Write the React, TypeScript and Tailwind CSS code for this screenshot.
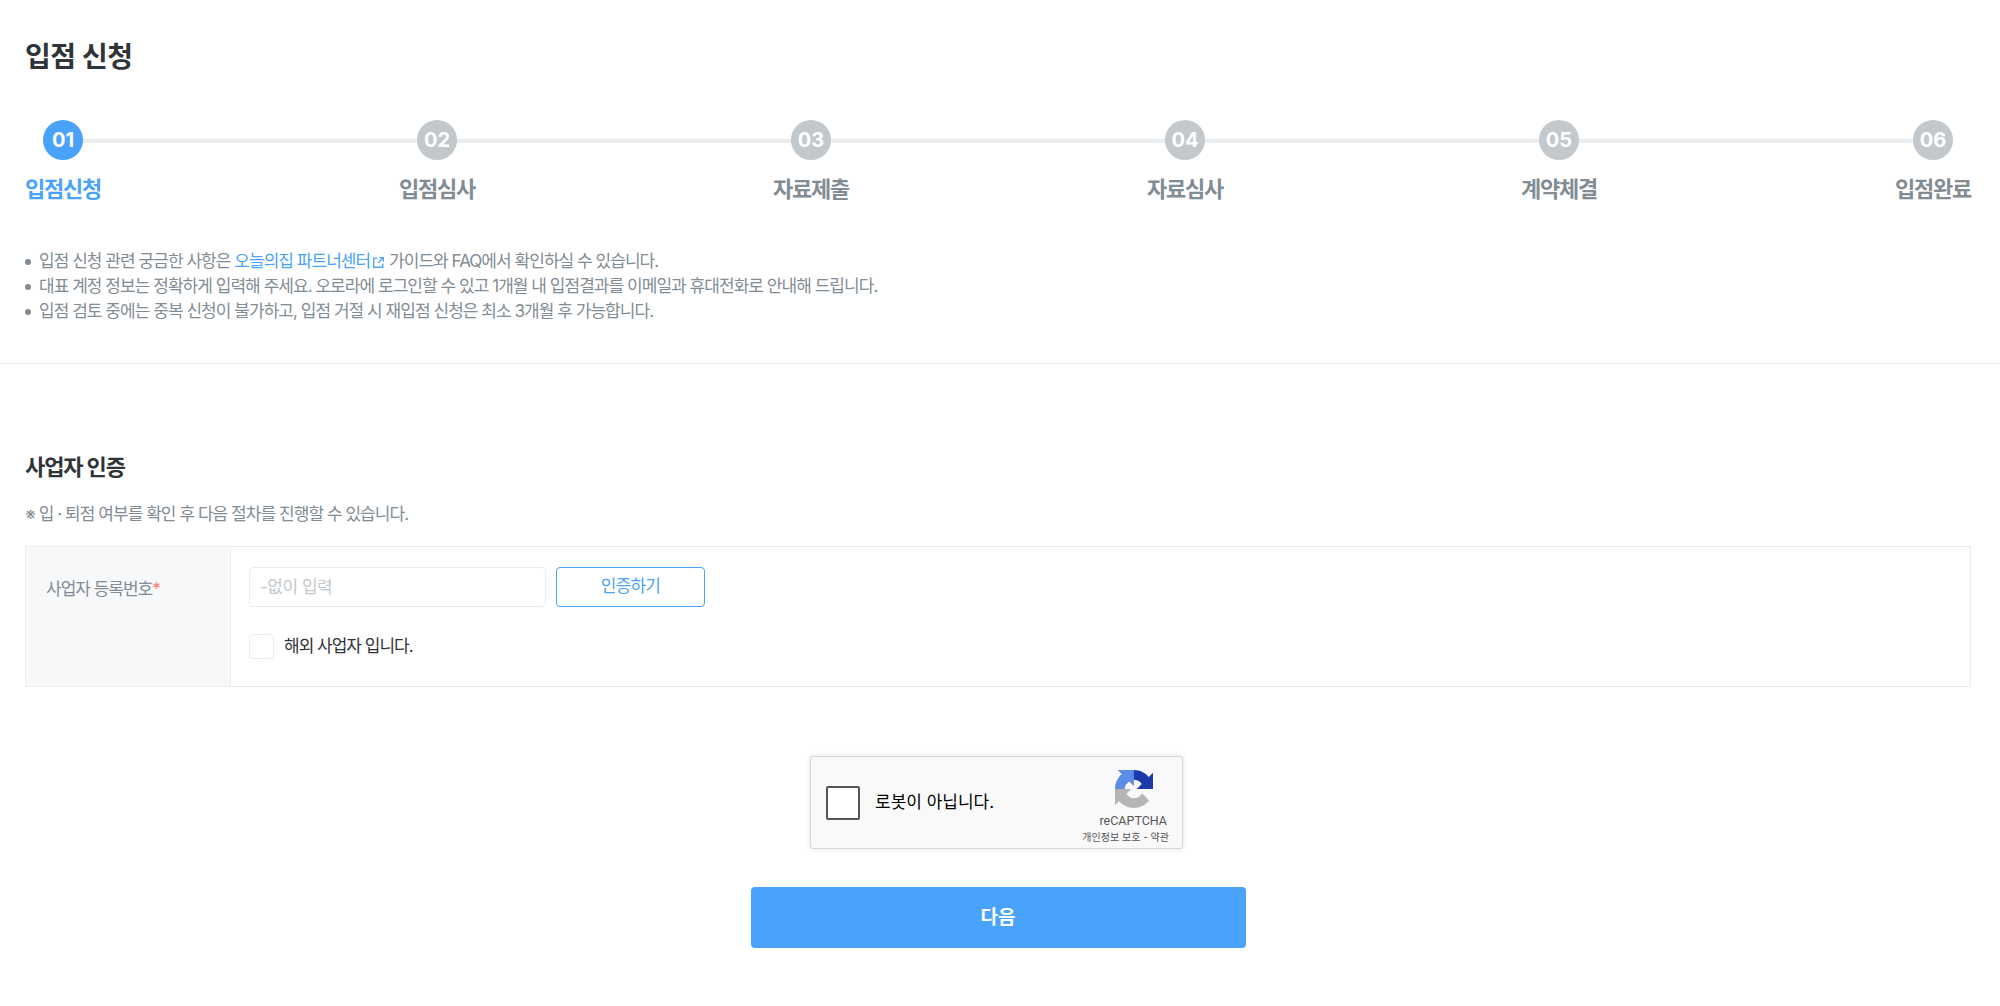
const font = "font-['Inter','Noto_Sans_CJK_KR',sans-serif]"

const steps = [
  { no: '01', label: '입점신청' },
  { no: '02', label: '입점심사' },
  { no: '03', label: '자료제출' },
  { no: '04', label: '자료심사' },
  { no: '05', label: '계약체결' },
  { no: '06', label: '입점완료' },
]

function ExternalIcon() {
  return (
    <svg viewBox="0 0 12 12" className="inline-block w-[13px] h-[13px] ml-[2px] align-[-2px]" fill="none" stroke="#4aa3fb" strokeWidth="1.2">
      <path d="M5 2H1.6v8.4H10V7" />
      <path d="M6.8 1.5h3.7v3.7" />
      <path d="M10.4 1.6L5.6 6.4" />
    </svg>
  )
}

function RecaptchaLogo() {
  return (
    <svg viewBox="0 0 64 64" className="w-[38px] h-[38px] mr-[16px]">
      <path d="M64 31.955l-.033-1.37V4.687l-7.16 7.16C50.948 4.674 42.033.093 32.05.093c-10.4 0-19.622 4.96-25.458 12.64l11.736 11.86a15.55 15.55 0 0 1 4.754-5.334c2.05-1.6 4.952-2.906 8.968-2.906.485 0 .86.057 1.135.163 4.976.393 9.288 3.14 11.828 7.124l-8.307 8.307c10.522-.04 22.4-.066 27.295.005" fill="#1c3aa9" />
      <path d="M31.862.001l-1.37.033H4.592l7.16 7.16C4.58 13.053-.001 21.968-.001 31.95c0 10.4 4.96 19.622 12.64 25.458l11.86-11.736a15.55 15.55 0 0 1-5.334-4.754c-1.6-2.05-2.906-4.952-2.906-8.968 0-.485.057-.86.163-1.135.393-4.976 3.14-9.288 7.124-11.828l8.307 8.307c-.04-10.522-.066-22.4.005-27.295" fill="#5b8ce8" />
      <path d="M.001 31.958l.033 1.37v25.9l7.16-7.16c5.86 7.173 14.774 11.754 24.757 11.754 10.4 0 19.622-4.96 25.458-12.64l-11.736-11.86a15.55 15.55 0 0 1-4.754 5.334c-2.05 1.6-4.952 2.906-8.968 2.906-.485 0-.86-.057-1.135-.163-4.976-.393-9.288-3.14-11.828-7.124l8.307-8.307c-10.522.04-22.4.066-27.295-.005" fill="#b5b5b5" />
    </svg>
  )
}

export default function App() {
  return (
    <div className={`${font} bg-white min-h-[1006px] text-[#2f3438]`}>
      <div className="pl-[25px] pr-[29px]">
        <h1 className="pt-[35px] text-[28px] leading-[44px] font-bold tracking-[-0.4px]">입점 신청</h1>

        <div className="relative mt-[41px] flex justify-between">
          <div className="absolute left-[38px] right-[38px] top-[19px] h-1 bg-[#eaedef]" />
          {steps.map((s, i) => (
            <div key={s.no} className="relative flex flex-col items-center w-[76px]">
              <div className={`w-10 h-10 rounded-full flex items-center justify-center text-white text-[20px] font-bold ${i === 0 ? 'bg-[#4aa3fb]' : 'bg-[#c2c8cc]'}`}>
                {s.no}
              </div>
              <div className={`mt-[14px] text-[22px] leading-[30px] font-semibold tracking-[-1.2px] whitespace-nowrap ${i === 0 ? 'text-[#4aa3fb]' : 'text-[#828c94]'}`}>
                {s.label}
              </div>
            </div>
          ))}
        </div>

        <ul className="mt-[45px] text-[17px] leading-[25px] tracking-[-0.96px] text-[#828c94]">
          <li className="flex items-center">
            <span className="w-[6px] h-[6px] rounded-full bg-[#828c94] mr-[8px] shrink-0" />
            <span>
              입점 신청 관련 궁금한 사항은 <span className="text-[#4aa3fb]">오늘의집 파트너센터<ExternalIcon /></span> 가이드와 FAQ에서 확인하실 수 있습니다.
            </span>
          </li>
          <li className="flex items-center">
            <span className="w-[6px] h-[6px] rounded-full bg-[#828c94] mr-[8px] shrink-0" />
            <span>대표 계정 정보는 정확하게 입력해 주세요. 오로라에 로그인할 수 있고 1개월 내 입점결과를 이메일과 휴대전화로 안내해 드립니다.</span>
          </li>
          <li className="flex items-center">
            <span className="w-[6px] h-[6px] rounded-full bg-[#828c94] mr-[8px] shrink-0" />
            <span>입점 검토 중에는 중복 신청이 불가하고, 입점 거절 시 재입점 신청은 최소 3개월 후 가능합니다.</span>
          </li>
        </ul>
      </div>

      <div className="mt-[39px] h-px bg-[#eaedef]" />

      <div className="pl-[25px] pr-[29px]">
        <h2 className="mt-[87px] text-[22px] leading-[32px] font-bold tracking-[-1.1px]">사업자 인증</h2>
        <p className="mt-[19px] text-[17px] leading-[24px] tracking-[-0.95px] text-[#828c94]">※ 입 · 퇴점 여부를 확인 후 다음 절차를 진행할 수 있습니다.</p>

        <div className="mt-[20px] flex h-[141px] border border-[#eaedef]">
          <div className="w-[205px] shrink-0 bg-[#f7f8fa] border-r border-[#eaedef] pl-[20px] pt-[30px] text-[17px] leading-[24px] tracking-[-1px] text-[#828c94]">
            사업자 등록번호<span className="text-[#f77]">*</span>
          </div>
          <div className="pl-[18px] pt-[20px]">
            <div className="flex gap-[10px]">
              <input
                readOnly
                placeholder="-없이 입력"
                className="w-[297px] h-[40px] rounded border border-[#eaedef] px-[10px] text-[17px] tracking-[-0.5px] placeholder:text-[#c2c8cc] outline-none"
              />
              <button className="w-[149px] h-[40px] rounded border border-[#4aa3fb] text-[#4aa3fb] text-[17px] tracking-[-0.8px]">인증하기</button>
            </div>
            <label className="mt-[27px] flex items-center gap-[10px]">
              <span className="w-[25px] h-[25px] rounded border border-[#eaedef]" />
              <span className="text-[17px] leading-[25px] tracking-[-1px] text-[#2f3438]">해외 사업자 입니다.</span>
            </label>
          </div>
        </div>

        <div className="mt-[69px] flex justify-center pr-[3px]">
          <div className="w-[373px] h-[93px] flex bg-[#f9f9f9] border border-[#d6d6d6] rounded-[3px] shadow-[0_0_4px_1px_rgba(0,0,0,0.08)]">
            <div className="flex items-center flex-1 pl-[15px]">
              <span className="w-[34px] h-[34px] bg-white border-2 border-[#555] rounded-[2px]" />
              <span className="ml-[15px] text-[17px] text-black">로봇이 아닙니다.</span>
            </div>
            <div className="w-[110px] flex flex-col items-end pt-[13px] pr-[13px]">
              <RecaptchaLogo />
              <div className="mt-[5px] mr-[2px] text-[12.5px] leading-[16px] text-[#555] font-['Roboto',sans-serif]">reCAPTCHA</div>
              <div className="mt-[1px] text-[10px] leading-[14px] text-[#555] whitespace-nowrap">개인정보 보호 - 약관</div>
            </div>
          </div>
        </div>

        <div className="mt-[38px] flex justify-center">
          <button className="w-[495px] h-[61px] pt-[2px] rounded bg-[#4aa3fb] text-white text-[19px] font-semibold">다음</button>
        </div>
      </div>
    </div>
  )
}
